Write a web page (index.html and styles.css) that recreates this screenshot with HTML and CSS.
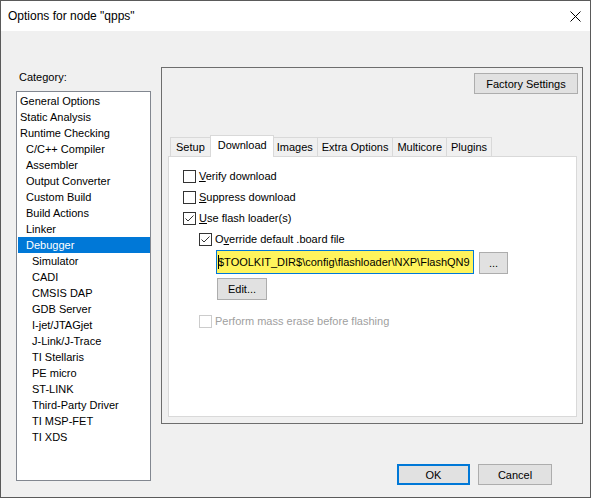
FILE: index.html
```html
<!DOCTYPE html>
<html>
<head>
<meta charset="utf-8">
<link rel="stylesheet" href="styles.css">
</head>
<body>
<div class="window">
  <div class="titlebar">
    <span class="title">Options for node "qpps"</span>
    <svg class="close" width="11" height="11" viewBox="0 0 11 11"><path d="M0.5 0.5 L10.5 10.5 M10.5 0.5 L0.5 10.5" stroke="#000" stroke-width="1" fill="none"/></svg>
  </div>
  <div class="client">
    <div class="left">
      <div class="cat-label">Category:</div>
      <ul class="catlist">
        <li class="l0">General Options</li>
        <li class="l0">Static Analysis</li>
        <li class="l0">Runtime Checking</li>
        <li class="l1">C/C++ Compiler</li>
        <li class="l1">Assembler</li>
        <li class="l1">Output Converter</li>
        <li class="l1">Custom Build</li>
        <li class="l1">Build Actions</li>
        <li class="l1">Linker</li>
        <li class="l1 selected">Debugger</li>
        <li class="l2">Simulator</li>
        <li class="l2">CADI</li>
        <li class="l2">CMSIS DAP</li>
        <li class="l2">GDB Server</li>
        <li class="l2">I-jet/JTAGjet</li>
        <li class="l2">J-Link/J-Trace</li>
        <li class="l2">TI Stellaris</li>
        <li class="l2">PE micro</li>
        <li class="l2">ST-LINK</li>
        <li class="l2">Third-Party Driver</li>
        <li class="l2">TI MSP-FET</li>
        <li class="l2">TI XDS</li>
      </ul>
    </div>
    <div class="right">
      <div class="frame">
        <div class="frame-top"><button class="btn factory">Factory Settings</button></div>
        <div class="tabs">
          <div class="tab">Setup</div>
          <div class="tab active">Download</div>
          <div class="tab">Images</div>
          <div class="tab">Extra Options</div>
          <div class="tab">Multicore</div>
          <div class="tab">Plugins</div>
        </div>
        <div class="panel">
          <div class="row"><span class="box"></span><span class="lbl"><u>V</u>erify download</span></div>
          <div class="row"><span class="box"></span><span class="lbl"><u>S</u>uppress download</span></div>
          <div class="row"><span class="box checked"><svg width="11" height="11" viewBox="0 0 11 11"><path d="M1.5 5.5 L4 8 L9.5 2.5" stroke="#333" stroke-width="1" fill="none"/></svg></span><span class="lbl"><u>U</u>se flash loader(s)</span></div>
          <div class="row sub"><span class="box checked"><svg width="11" height="11" viewBox="0 0 11 11"><path d="M1.5 5.5 L4 8 L9.5 2.5" stroke="#333" stroke-width="1" fill="none"/></svg></span><span class="lbl">O<u>v</u>erride default .board file</span></div>
          <div class="field-row">
            <div class="field"><span class="caret"></span>$TOOLKIT_DIR$\config\flashloader\NXP\FlashQN9</div>
            <button class="btn browse">...</button>
          </div>
          <button class="btn edit">Edit...</button>
          <div class="row sub disabled"><span class="box"></span><span class="lbl">Perform mass erase before flashing</span></div>
        </div>
      </div>
      <div class="dlg-buttons">
        <button class="btn ok">OK</button>
        <button class="btn cancel">Cancel</button>
      </div>
    </div>
  </div>
</div>
</body>
</html>
```

FILE: styles.css
```css
html, body {
  margin: 0;
  padding: 0;
  background: #ffffff;
}

.window {
  width: 591px;
  height: 498px;
  box-sizing: border-box;
  border: 1px solid #5a5a5a;
  display: flex;
  flex-direction: column;
  font-family: "Liberation Sans", Arial, sans-serif;
  font-size: 11px;
  color: #000;
}

.titlebar {
  height: 30px;
  flex: none;
  background: #ffffff;
  display: flex;
  align-items: center;
  justify-content: space-between;
  padding: 0 9px 0 7px;
}

.title {
  font-size: 12px;
}

.close {
  display: block;
}

.client {
  flex: 1;
  background: #f0f0f0;
  display: flex;
}

.left {
  margin-left: 15px;
  padding-top: 39px;
  width: 135px;
}

.cat-label {
  height: 14px;
  line-height: 14px;
  margin-bottom: 7px;
  padding-left: 3px;
}

.catlist {
  list-style: none;
  margin: 0;
  padding: 1px 0 0 1px;
  width: 135px;
  height: 390px;
  box-sizing: border-box;
  border: 1px solid #828790;
  background: #ffffff;
}

.catlist li {
  height: 16px;
  line-height: 16px;
  white-space: nowrap;
}

.catlist .l0 { padding-left: 2px; }
.catlist .l1 { padding-left: 8px; }
.catlist .l2 { padding-left: 14px; }

.catlist .selected {
  background: #0078d7;
  color: #ffffff;
}

.right {
  margin-left: 10px;
  padding-top: 36px;
  width: 422px;
  display: flex;
  flex-direction: column;
}

.frame {
  height: 357px;
  box-sizing: border-box;
  border: 1px solid #6d6d6d;
  padding: 5px 4px 6px 6px;
  display: flex;
  flex-direction: column;
}

.frame-top {
  display: flex;
  justify-content: flex-end;
}

.btn {
  height: 21px;
  box-sizing: border-box;
  border: 1px solid #adadad;
  background: #e1e1e1;
  font: inherit;
  color: #000;
  padding: 0;
  margin: 0;
}

.factory {
  width: 104px;
}

.tabs {
  display: flex;
  align-items: flex-end;
  height: 21px;
  margin-top: 41px;
  margin-left: 2px;
  position: relative;
  z-index: 1;
}

.tab {
  height: 19px;
  box-sizing: border-box;
  border: 1px solid #d9d9d9;
  border-bottom: none;
  background: #f0f0f0;
  padding: 0 4px 0 4px;
  line-height: 18px;
  margin-left: -1px;
}

.tab:first-child {
  margin-left: 0;
  padding: 0 5px;
}

.tab.active {
  height: 22px;
  background: #ffffff;
  margin-bottom: -1px;
  margin-left: -1px;
  margin-right: -1px;
  padding: 0 6px 0 7px;
  line-height: 18px;
  position: relative;
  z-index: 2;
}

.panel {
  flex: 1;
  border: 1px solid #d9d9d9;
  background: #ffffff;
  margin-right: 1px;
  padding: 13px 0 0 14px;
}

.row {
  display: flex;
  align-items: center;
  height: 13px;
  margin-bottom: 8px;
  white-space: nowrap;
}

.row.sub {
  margin-left: 16px;
}

.box {
  width: 13px;
  height: 13px;
  box-sizing: border-box;
  border: 1px solid #333333;
  background: #ffffff;
  flex: none;
  display: flex;
}

.box svg {
  display: block;
}

.lbl {
  margin-left: 3px;
  line-height: 13px;
}

.disabled .box {
  border-color: #cccccc;
}

.disabled .lbl {
  color: #a0a0a0;
}

.field-row {
  display: flex;
  align-items: flex-end;
  margin-left: 33px;
  margin-top: -4px;
}

.field {
  width: 258px;
  height: 24px;
  box-sizing: border-box;
  border: 1px solid #0078d7;
  background: #fff45c;
  padding-left: 1px;
  line-height: 22px;
  white-space: nowrap;
  overflow: hidden;
  position: relative;
}

.caret {
  position: absolute;
  left: 1px;
  top: 4px;
  width: 1px;
  height: 14px;
  background: #000;
}

.browse {
  width: 29px;
  height: 22px;
  margin-left: 5px;
}

.edit {
  display: block;
  width: 50px;
  height: 22px;
  margin: 4px 0 0 34px;
}

.row.disabled {
  margin-top: 15px;
}

.dlg-buttons {
  display: flex;
  justify-content: flex-end;
  gap: 8px;
  margin-top: 40px;
  padding-right: 31px;
}

.ok {
  width: 73px;
  border: 2px solid #0078d7;
}

.cancel {
  width: 74px;
}
```
